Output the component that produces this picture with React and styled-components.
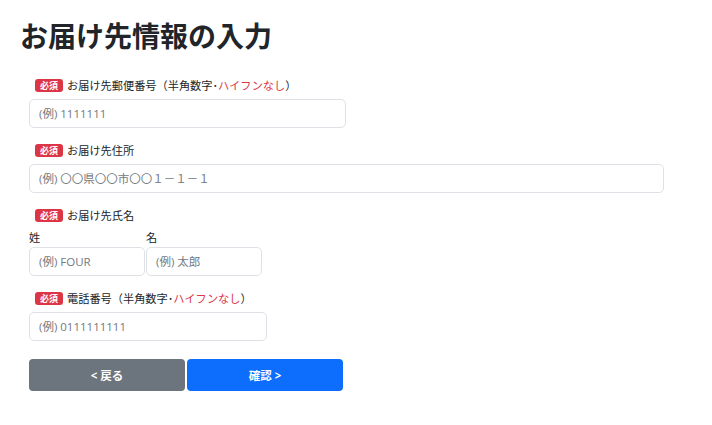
import React from 'react'
import styled, { createGlobalStyle } from 'styled-components'

const GlobalStyle = createGlobalStyle`
  body {
    margin: 0;
    background: #ffffff;
    font-family: "Open Sans", "Noto Sans CJK JP", sans-serif;
    color: #212529;
  }
`

const fields = [
  { id: 'zip', label: 'お届け先郵便番号', note: true, width: 317, placeholder: '(例) 1111111' },
  { id: 'addr', label: 'お届け先住所', width: 635, placeholder: '(例) 〇〇県〇〇市〇〇１－１－１' },
]

export default function App() {
  return (
    <Page>
      <GlobalStyle />
      <Title>お届け先情報の入力</Title>
      <Form>
        {fields.map((f) => (
          <Field key={f.id}>
            <LabelRow>
              <Badge>必須</Badge>
              <span>
                {f.label}
                {f.note && <Note />}
              </span>
            </LabelRow>
            <Input $width={f.width} placeholder={f.placeholder} />
          </Field>
        ))}

        <Field>
          <LabelRow>
            <Badge>必須</Badge>
            <span>お届け先氏名</span>
          </LabelRow>
          <NameRow>
            <NameCol>
              <SubLabel>姓</SubLabel>
              <Input $width={116} placeholder="(例) FOUR" />
            </NameCol>
            <NameCol>
              <SubLabel>名</SubLabel>
              <Input $width={116} placeholder="(例) 太郎" />
            </NameCol>
          </NameRow>
        </Field>

        <Field>
          <LabelRow>
            <Badge>必須</Badge>
            <span>
              電話番号
              <Note />
            </span>
          </LabelRow>
          <Input $width={238} placeholder="(例) 0111111111" />
        </Field>

        <Buttons>
          <Button $kind="back">&lt; 戻る</Button>
          <Button>確認 &gt;</Button>
        </Buttons>
      </Form>
    </Page>
  )
}

function Note() {
  return (
    <>
      （半角数字･<Red>ハイフンなし</Red>）
    </>
  )
}

const Page = styled.div`
  padding: 19px 20px 20px;
`

const Title = styled.h1`
  margin: 0 0 24px;
  font-size: 28px;
  line-height: 34px;
  font-weight: 700;
  color: #212529;
`

const Form = styled.div`
  padding-left: 9px;
  display: flex;
  flex-direction: column;
`

const Field = styled.div`
  margin-bottom: 14px;
`

const LabelRow = styled.div`
  display: flex;
  align-items: center;
  gap: 4px;
  height: 16px;
  padding-left: 6px;
  margin-bottom: 6px;
  font-size: 11.2px;
  color: #212529;
`

const Badge = styled.span`
  display: inline-flex;
  align-items: center;
  justify-content: center;
  width: 28px;
  height: 13px;
  border-radius: 3px;
  background: #dc3545;
  color: #ffffff;
  font-size: 9px;
  font-weight: 700;
`

const Red = styled.span`
  color: #dc3545;
`

const Input = styled.input`
  box-sizing: border-box;
  display: block;
  width: ${(p) => p.$width}px;
  height: 29px;
  padding: 0 9px;
  border: 1px solid #dee2e6;
  border-radius: 5px;
  background: #ffffff;
  font-family: inherit;
  font-size: 11.5px;
  color: #212529;
  outline: none;

  &::placeholder {
    color: #737980;
  }
`

const NameRow = styled.div`
  display: flex;
  gap: 1px;
`

const NameCol = styled.div`
  display: flex;
  flex-direction: column;
`

const SubLabel = styled.div`
  height: 18px;
  line-height: 18px;
  font-size: 11.2px;
  color: #212529;
`

const Buttons = styled.div`
  display: flex;
  gap: 2px;
  margin-top: 4px;
`

const Button = styled.button`
  width: 156px;
  height: 32px;
  border: none;
  border-radius: 4px;
  background: ${(p) => (p.$kind === 'back' ? '#6c757d' : '#0d6efd')};
  color: #ffffff;
  font-family: inherit;
  font-size: 11.5px;
  font-weight: 700;
  cursor: pointer;
`
